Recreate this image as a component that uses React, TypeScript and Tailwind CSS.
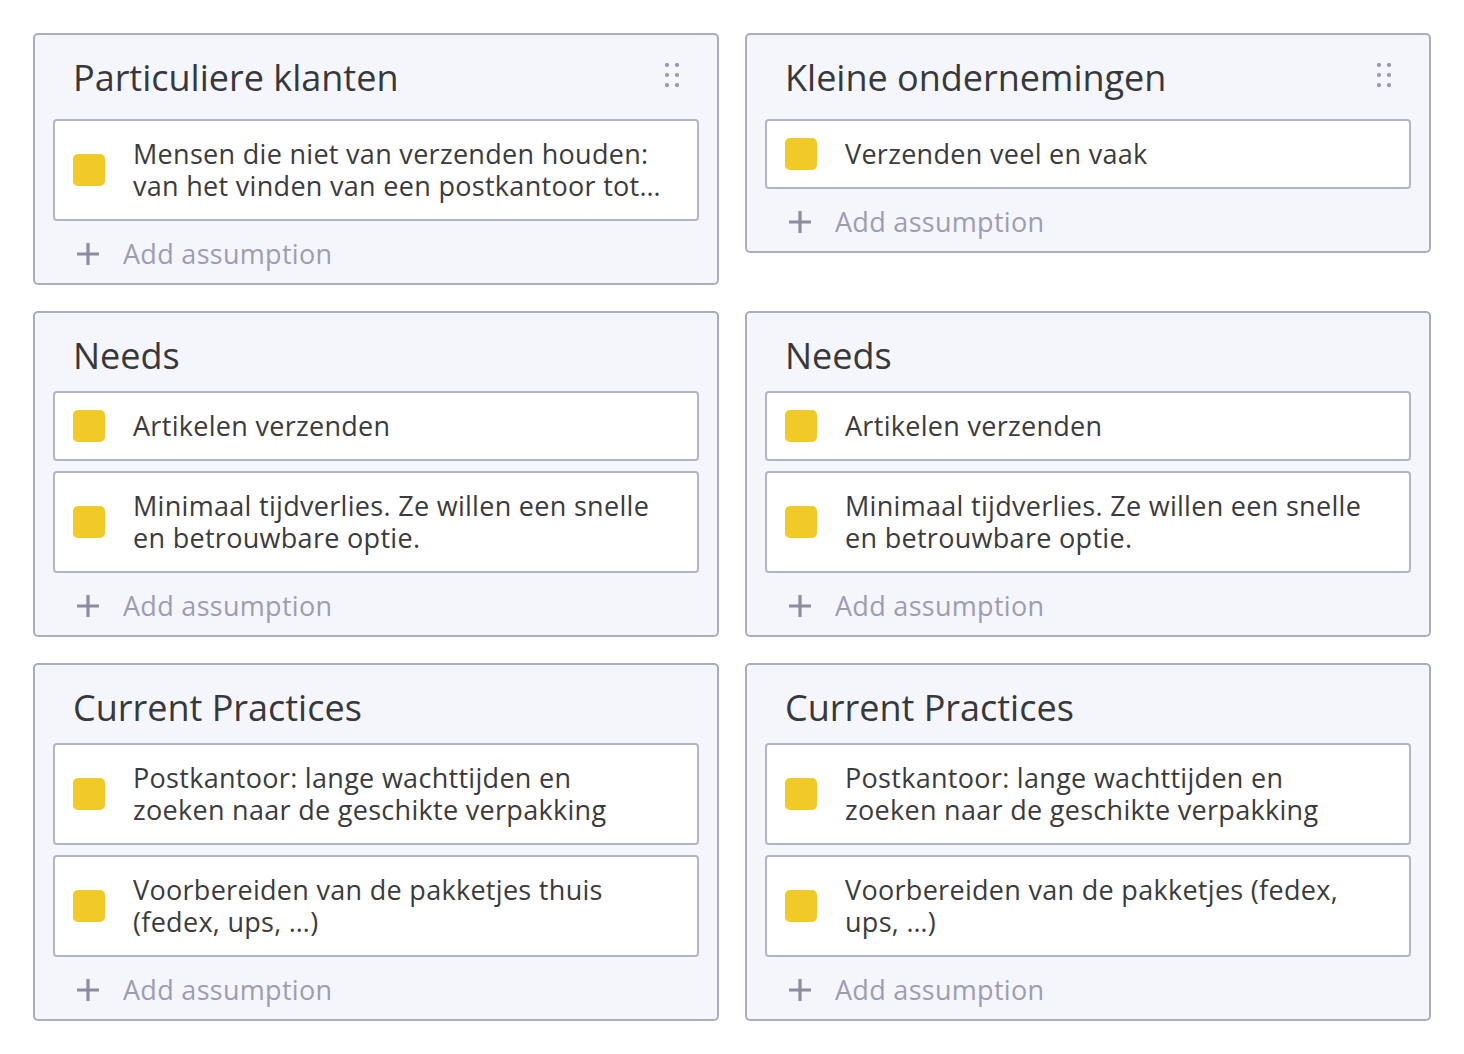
import React from 'react';

interface Section {
  title: string;
  draggable?: boolean;
  items: string[];
}

const leftColumn: Section[] = [
  {
    title: 'Particuliere klanten',
    draggable: true,
    items: ['Mensen die niet van verzenden houden:\nvan het vinden van een postkantoor tot…'],
  },
  {
    title: 'Needs',
    items: ['Artikelen verzenden', 'Minimaal tijdverlies. Ze willen een snelle\nen betrouwbare optie.'],
  },
  {
    title: 'Current Practices',
    items: [
      'Postkantoor: lange wachttijden en\nzoeken naar de geschikte verpakking',
      'Voorbereiden van de pakketjes thuis\n(fedex, ups, …)',
    ],
  },
];

const rightColumn: Section[] = [
  {
    title: 'Kleine ondernemingen',
    draggable: true,
    items: ['Verzenden veel en vaak'],
  },
  {
    title: 'Needs',
    items: ['Artikelen verzenden', 'Minimaal tijdverlies. Ze willen een snelle\nen betrouwbare optie.'],
  },
  {
    title: 'Current Practices',
    items: [
      'Postkantoor: lange wachttijden en\nzoeken naar de geschikte verpakking',
      'Voorbereiden van de pakketjes (fedex,\nups, …)',
    ],
  },
];

const DragHandle: React.FC = () => (
  <svg width="14" height="24" viewBox="0 0 14 24" className="mb-[6px] shrink-0">
    {[2, 12, 22].map((cy) => (
      <React.Fragment key={cy}>
        <circle cx="2" cy={cy} r="2.1" fill="#9a9aae" />
        <circle cx="12" cy={cy} r="2.1" fill="#9a9aae" />
      </React.Fragment>
    ))}
  </svg>
);

const PlusIcon: React.FC = () => (
  <svg width="24" height="24" viewBox="0 0 24 24" className="shrink-0">
    <path d="M12 1v22M1 12h22" stroke="#8c8c9c" strokeWidth="3.2" />
  </svg>
);

const AssumptionCard: React.FC<{ text: string }> = ({ text }) => (
  <div className="flex items-center rounded-[4px] border-2 border-[#b4b4c8] bg-white py-[17px] pl-[18px] pr-4">
    <div className="h-8 w-8 shrink-0 rounded-[5px] bg-[#f2ca27]" />
    <p className="ml-[28px] whitespace-pre-line text-[27px] leading-8 tracking-[0.3px] text-[#3b3b3d]">
      {text}
    </p>
  </div>
);

const SectionCard: React.FC<{ section: Section }> = ({ section }) => (
  <div className="rounded-[5px] border-2 border-[#acacc3] bg-[#f5f6fc] px-[18px] pb-[7px] pt-[21px]">
    <div
      className={`flex items-center justify-between pl-[20px] pr-[20px] ${
        section.draggable ? 'mb-[19px]' : 'mb-[13px]'
      }`}
    >
      <h2 className="h-11 text-[36px] leading-[44px] text-[#37383c]">{section.title}</h2>
      {section.draggable && <DragHandle />}
    </div>
    <div className="flex flex-col gap-[10px]">
      {section.items.map((item, i) => (
        <AssumptionCard key={i} text={item} />
      ))}
    </div>
    <button className="mt-[11px] flex h-11 items-center pl-[23px] text-[27px] tracking-[0.3px] text-[#9d9db2]">
      <PlusIcon />
      <span className="ml-[23px]">Add assumption</span>
    </button>
  </div>
);

export default function App() {
  return (
    <div
      className="min-h-screen bg-white p-[33px]"
      style={{ fontFamily: '"Open Sans", Lato, sans-serif' }}
    >
      <div className="grid grid-cols-2 items-start gap-[26px]">
        {leftColumn.map((s, i) => (
          <React.Fragment key={i}>
            <SectionCard section={s} />
            <SectionCard section={rightColumn[i]} />
          </React.Fragment>
        ))}
      </div>
    </div>
  );
}
